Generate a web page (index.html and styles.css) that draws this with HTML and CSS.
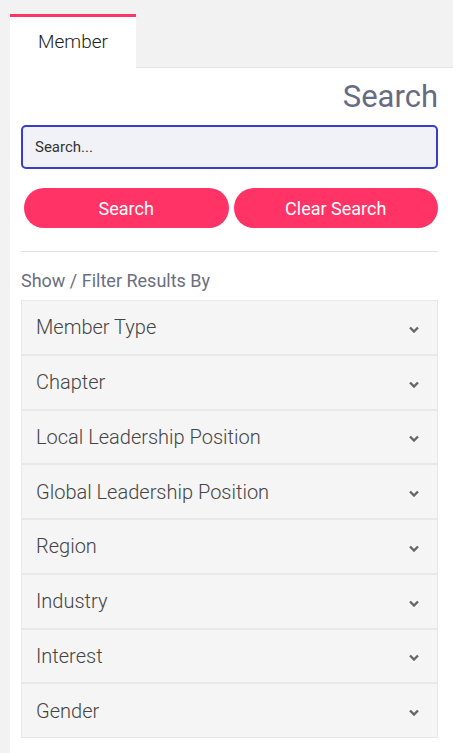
FILE: index.html
```html
<!DOCTYPE html>
<html>
<head>
<meta charset="utf-8">
<link rel="stylesheet" href="styles.css">
</head>
<body>
<div class="page">
  <div class="tabs">
    <div class="tab active">Member</div>
  </div>
  <div class="panel">
    <h2 class="title">Search</h2>
    <input class="search-input" type="text" placeholder="Search...">
    <div class="buttons">
      <button class="btn">Search</button>
      <button class="btn">Clear Search</button>
    </div>
    <hr class="divider">
    <div class="filter-label">Show / Filter Results By</div>
    <div class="accordion">
      <div class="item"><span>Member Type</span><svg class="chev" viewBox="0 0 10 7"><path d="M1 1.5 L5 5.5 L9 1.5" /></svg></div>
      <div class="item"><span>Chapter</span><svg class="chev" viewBox="0 0 10 7"><path d="M1 1.5 L5 5.5 L9 1.5" /></svg></div>
      <div class="item"><span>Local Leadership Position</span><svg class="chev" viewBox="0 0 10 7"><path d="M1 1.5 L5 5.5 L9 1.5" /></svg></div>
      <div class="item"><span>Global Leadership Position</span><svg class="chev" viewBox="0 0 10 7"><path d="M1 1.5 L5 5.5 L9 1.5" /></svg></div>
      <div class="item"><span>Region</span><svg class="chev" viewBox="0 0 10 7"><path d="M1 1.5 L5 5.5 L9 1.5" /></svg></div>
      <div class="item"><span>Industry</span><svg class="chev" viewBox="0 0 10 7"><path d="M1 1.5 L5 5.5 L9 1.5" /></svg></div>
      <div class="item"><span>Interest</span><svg class="chev" viewBox="0 0 10 7"><path d="M1 1.5 L5 5.5 L9 1.5" /></svg></div>
      <div class="item"><span>Gender</span><svg class="chev" viewBox="0 0 10 7"><path d="M1 1.5 L5 5.5 L9 1.5" /></svg></div>
    </div>
  </div>
</div>
</body>
</html>
```
FILE: styles.css
```css
* { box-sizing: border-box; }
html, body { margin: 0; padding: 0; }
body {
  background: #f2f2f2;
  font-family: Roboto, "Liberation Sans", sans-serif;
  height: 753px;
  overflow: hidden;
}
.page {
  padding-left: 10px;
  padding-top: 14px;
}
.tabs {
  display: flex;
  border-bottom: 1px solid #e2e2e2;
  height: 54px;
}
.tab {
  width: 126px;
  height: 54px;
  background: #fff;
  border-top: 3px solid #ff3366;
  color: #222;
  font-size: 19px;
  font-weight: 300;
  display: flex;
  align-items: center;
  justify-content: center;
  padding-bottom: 2px;
  margin-bottom: -1px;
}
.panel {
  background: #fff;
  padding: 10px 15px 40px 11px;
  min-height: 700px;
}
.title {
  margin: 0;
  text-align: right;
  font-weight: 400;
  font-size: 31px;
  line-height: 38px;
  color: #666b84;
}
.search-input {
  display: block;
  width: 100%;
  height: 44px;
  margin-top: 9px;
  border: 2px solid #3a3dc9;
  border-radius: 5px;
  background: #f0f2f8;
  padding: 0 12px;
  font-family: inherit;
  font-size: 15px;
  color: #333;
  outline: none;
}
.search-input::placeholder { color: #333; }
.buttons {
  display: flex;
  gap: 5px;
  margin-top: 19px;
  padding-left: 3px;
}
.btn {
  flex: 1;
  height: 40px;
  border: none;
  border-radius: 20px;
  background: #ff3366;
  color: #fff;
  font-family: inherit;
  font-size: 18px;
  padding: 0;
}
.divider {
  border: none;
  border-top: 1px solid #e2e2e2;
  margin: 23px 0 0 0;
}
.filter-label {
  margin-top: 19px;
  font-size: 18px;
  line-height: 20px;
  color: #6b6e80;
}
.accordion {
  margin-top: 9px;
}
.item {
  height: 54.75px;
  background: #f5f5f5;
  border: 1px solid #e8e8e8;
  display: flex;
  align-items: center;
  justify-content: space-between;
  padding: 0 18px 0 14px;
  font-size: 20px;
  font-weight: 300;
  color: #444;
}
.chev {
  width: 10px;
  height: 7px;
  fill: none;
  stroke: #666;
  stroke-width: 2.4;
  margin-top: 4px;
}
```
